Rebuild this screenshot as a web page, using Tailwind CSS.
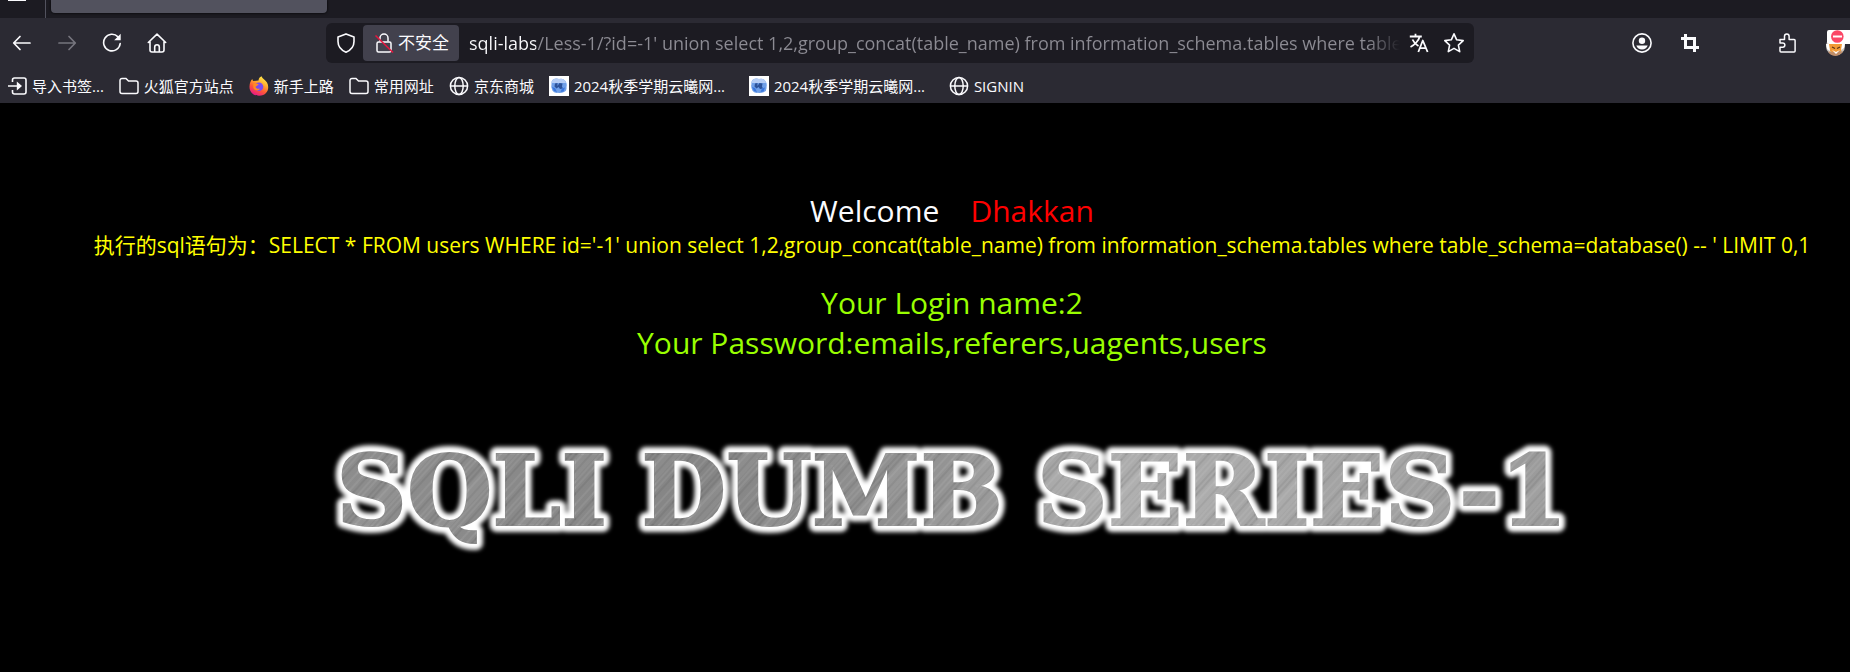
<!DOCTYPE html>
<html lang="zh-CN">
<head>
  <meta charset="UTF-8" />
  <meta name="viewport" content="width=device-width, initial-scale=1.0"/>
  <title>Less-1 **Error Based- String**</title>
  <script src="https://cdn.jsdelivr.net/npm/@tailwindcss/browser@4"></script>
</head>
<body class="bg-black min-h-screen overflow-x-hidden text-[#fbfbfe] font-['Open_Sans','Noto_Sans_CJK_SC',sans-serif]">

  <!-- shared icons -->
  <svg class="hidden">
    <symbol id="folder" viewBox="0 0 20 20">
      <path d="M1 4.500a2 2 0 0 1 2-2h4l2.500 2.500h7.500a2 2 0 0 1 2 2v8.500a2 2 0 0 1-2 2H3a2 2 0 0 1-2-2z" fill="none" stroke="currentColor" stroke-width="1.500"/>
    </symbol>
    <symbol id="globe" viewBox="0 0 20 20">
      <g fill="none" stroke="currentColor" stroke-width="1.500"><circle cx="10" cy="10" r="8.600"/><ellipse cx="10" cy="10" rx="4.200" ry="8.600"/><path d="M1.400 10h17.200"/></g>
    </symbol>
    <symbol id="cloud" viewBox="0 0 20 20">
      <rect width="20" height="20" fill="#fff"/>
      <path d="M4 3.500q3-1.500 6-.5 4-1 6 1.500 2.500 3 1.500 6.500.5 4-2.500 5-3 1.500-6 .8-4 .7-5.500-2Q1.500 11 2.500 8 2 5 4 3.500z" fill="#6f9fe8"/>
      <path d="M4 3.500q3-1.500 6-.5 4-1 6 1.500l1 2.500H2.600q0-2 1.400-3.500z" fill="#b5cdf5"/>
      <path d="M6 7.500l2.500-.5v3l2-3 3 .5-.5 3 1 2-3 .5-1.500-2-2 1.500-2-2z" fill="#2c529a"/>
      <path d="M3 11l3 1 2 4-3-1zM13 12.500l3-1-1.500 4-3 .5z" fill="#3a77dd"/>
    </symbol>
  </svg>

  <header class="bg-[#2b2a33]">
    <!-- tab strip -->
    <div class="flex h-[18px] bg-[#1c1b22]">
      <div class="ml-2 h-px w-[18px] bg-[#fbfbfe]"></div>
      <div class="ml-[19px] w-px bg-[#52525e]"></div>
      <div class="ml-[5px] h-[13px] w-[276px] rounded-b bg-[#52525e] shadow-[0_0_3px_#000]"></div>
    </div>

    <!-- navigation bar -->
    <nav class="flex h-[51px] items-center pl-3 pb-px">
      <div class="flex gap-[25px]">
        <button aria-label="Back"><svg class="size-5" viewBox="0 0 20 20" fill="none" stroke="currentColor" stroke-width="1.700" stroke-linecap="round" stroke-linejoin="round"><path d="M18 10H2M8 3.500L1.700 10 8 16.500"/></svg></button>
        <button aria-label="Forward" class="text-[#76757e]" disabled><svg class="size-5" viewBox="0 0 20 20" fill="none" stroke="currentColor" stroke-width="1.700" stroke-linecap="round" stroke-linejoin="round"><path d="M2 10h16M12 3.500l6.300 6.500-6.300 6.500"/></svg></button>
        <button aria-label="Reload"><svg class="size-5" viewBox="0 0 20 20" fill="none" stroke="currentColor" stroke-width="1.600" stroke-linecap="round"><path d="M16 3.900A8.300 8.300 0 1 0 18.200 10.500"/><path d="M18.700.8v6.500h-6.500z" fill="currentColor" stroke="none"/></svg></button>
        <button aria-label="Home"><svg class="size-5" viewBox="0 0 20 20" fill="none" stroke="currentColor" stroke-width="1.600" stroke-linecap="round" stroke-linejoin="round"><path d="M1.300 9.500L10 1.200l8.700 8.300M3 8.500v8.500a2 2 0 0 0 2 2h10a2 2 0 0 0 2-2V8.500M7.700 19v-5a2.300 2.300 0 0 1 4.600 0v5"/></svg></button>
      </div>

      <div class="ml-[159px] flex h-10 min-w-0 flex-1 items-center rounded-md bg-[#1c1b22] pl-[10px] pr-[9px]">
        <svg class="size-5 shrink-0" viewBox="0 0 20 20" fill="none" stroke="currentColor" stroke-width="1.600" stroke-linejoin="round"><path d="M10 .9l8 3.200v4.400c0 4.800-3 8.600-8 10.700-5-2.100-8-5.900-8-10.700V4.100z"/></svg>
        <button class="ml-[7px] flex h-9 shrink-0 items-center gap-[3px] rounded bg-[#42414d] px-[10px] text-[17px] whitespace-nowrap">
          <svg class="size-[22px]" viewBox="0 0 22 22" fill="none"><path d="M7 9.500V6a4 4 0 0 1 8 0v3.500" stroke="currentColor" stroke-width="1.500"/><rect x="4" y="10" width="14" height="10" rx="1.500" stroke="currentColor" stroke-width="1.500"/><path d="M2.500 3.500L20 20.500" stroke="#e5173f" stroke-width="1.600"/></svg>
          不安全
        </button>
        <!-- host part is white, the rest of the address grey and faded at the end -->
        <input type="text" aria-label="Address" value="sqli-labs/Less-1/?id=-1' union select 1,2,group_concat(table_name) from information_schema.tables where table_schema=database() --+" class="ml-[10px] h-8 min-w-0 flex-1 bg-[linear-gradient(to_right,#fbfbfe_67px,#8c8b93_67px,#8c8b93_calc(100%-41px),transparent_calc(100%-9px))] bg-clip-text text-[18px] text-transparent outline-none" />
        <button aria-label="Translate"><svg class="size-5" viewBox="0 0 20 20" fill="none" stroke="currentColor" stroke-width="1.800" stroke-linejoin="round"><path d="M.8 3.500h12M6.500.8v2.500M10.700 3.500C9.800 7.500 5.500 12 1.500 14M3.500 6.500c1 2.500 3.500 5 6 6.500"/><path d="M9.300 19l4.500-11.500L18.600 19M10.900 15.200h6"/></svg></button>
        <button aria-label="Bookmark this page" class="ml-[14px]"><svg class="size-[22px]" viewBox="0 0 22 22" fill="none" stroke="currentColor" stroke-width="1.600" stroke-linejoin="round"><path d="M11 1.800l2.700 6 6.500.8-4.800 4.500 1.300 6.500-5.700-3.200-5.700 3.200 1.300-6.500L1.800 8.600l6.500-.8z"/></svg></button>
      </div>

      <button aria-label="Account" class="ml-[158px]"><svg class="size-5" viewBox="0 0 20 20"><circle cx="10" cy="10" r="9.100" fill="none" stroke="currentColor" stroke-width="1.600"/><circle cx="10" cy="7.800" r="3.200" fill="currentColor"/><path d="M4.300 12.500h11.400q-1.500 4-5.700 4t-5.700-4z" fill="currentColor"/></svg></button>
      <button aria-label="Screenshot" class="ml-7"><svg class="size-5" viewBox="0 0 20 20" fill="none" stroke="currentColor" stroke-width="3"><path d="M5.500 1v13.500H19M1 5.500h13.500V19"/></svg></button>
      <button aria-label="Extensions" class="ml-[77px]"><svg class="size-5" viewBox="0 0 20 20" fill="none" stroke="currentColor" stroke-width="1.500" stroke-linejoin="round"><path d="M3 6.500h4.500V3.300a2.300 2.300 0 0 1 4.600 0v3.200h5a1 1 0 0 1 1 1V18a1 1 0 0 1-1 1H4a1 1 0 0 1-1-1v-3.800h2.700a2 2 0 0 0 0-4.300H3z"/></svg></button>
      <button aria-label="Proxy" class="ml-7"><svg class="h-[27px] w-[25px]" viewBox="0 0 25 27">
        <circle cx="10.500" cy="16" r="9.500" fill="#c9c5c1"/>
        <path d="M3 13h15l-2 8-6 3-5-3z" fill="#f39a35"/><path d="M3 21.500l6 .5 2 1 3-2 4 .5q-3 4-7.500 4.500Q5 25.500 3 21.500z" fill="#c08d68"/>
        <path d="M1 14l3 0 1 7-3-2zM20 14l-3 0-1 6 3-2zM7 20l4 2 4-2-4 4z" fill="#fff"/>
        <path d="M7 17l3 1.500M15 17l-3 1.500" stroke="#5c3317" stroke-width="1.200"/>
        <rect x="2" y="0" width="26" height="14" rx="2" fill="#fff"/><circle cx="12.300" cy="6.500" r="6.300" fill="#fb4766"/><path d="M8 6.500h9" stroke="#fff" stroke-width="2"/>
      </svg></button>
    </nav>

    <!-- bookmarks -->
    <div class="flex h-[34px] items-center gap-[15px] pl-2 pb-px text-[15px] leading-5 whitespace-nowrap">
      <a href="#" class="flex items-center gap-1"><svg class="size-5" viewBox="0 0 20 20" fill="none" stroke="currentColor" stroke-width="1.600"><path d="M4.500 6V4a2 2 0 0 1 2-2H16a2 2 0 0 1 2 2v12a2 2 0 0 1-2 2H6.500a2 2 0 0 1-2-2v-2M0 10h9"/><path d="M8.800 5.500L14 10l-5.200 4.500z" fill="currentColor" stroke="none"/></svg>导入书签...</a>
      <a href="#" class="flex items-center gap-[5px]"><svg class="size-5"><use href="#folder"/></svg>火狐官方站点</a>
      <a href="#" class="flex items-center gap-[5px]"><svg class="size-5" viewBox="0 0 20 20">
        <defs><linearGradient id="fox" x1=".8" y1="0" x2=".3" y2="1"><stop offset="0" stop-color="#fff44f"/><stop offset=".35" stop-color="#ffb02e"/><stop offset=".65" stop-color="#ff5a36"/><stop offset="1" stop-color="#e6148c"/></linearGradient></defs>
        <path d="M12.500.3c1 2.700 3.700 3.500 5.500 6.200 3 5.500.5 13-7.800 13.300C4 19.900.3 15.500.5 10.500.6 7 1.800 4.500 3.300 3c.2 1 .5 1.600 1 2.100L9.500 4.500c.2-2 1.300-3.500 3-4.200z" fill="url(#fox)"/>
        <circle cx="10" cy="10.800" r="4.300" fill="#7a4bf0"/><path d="M4.300 8c2-.8 4-.5 5.700.6-2 .6-2 2-3.500 2.200.5 2 2.800 2.400 4.500 1.700-1 3-6 2.500-6.700-1z" fill="#ff8a26"/>
      </svg>新手上路</a>
      <a href="#" class="flex items-center gap-[5px]"><svg class="size-5"><use href="#folder"/></svg>常用网址</a>
      <a href="#" class="flex items-center gap-[5px]"><svg class="size-5"><use href="#globe"/></svg>京东商城</a>
      <a href="#" class="flex w-[185px] items-center gap-[5px]"><svg class="size-5"><use href="#cloud"/></svg>2024秋季学期云曦网...</a>
      <a href="#" class="flex w-[185px] items-center gap-[5px]"><svg class="size-5"><use href="#cloud"/></svg>2024秋季学期云曦网...</a>
      <a href="#" class="flex items-center gap-[5px]"><svg class="size-5"><use href="#globe"/></svg>SIGNIN</a>
    </div>
  </header>

  <main class="pt-[88px] pl-[54px] text-center">
    <h1 class="text-[30px] leading-10 whitespace-pre">Welcome    <span class="text-[#ff0000]">Dhakkan</span></h1>
    <p class="text-[21px] leading-7 whitespace-nowrap text-[#ffff00]">执行的sql语句为：SELECT * FROM users WHERE id='-1' union select 1,2,group_concat(table_name) from information_schema.tables where table_schema=database() -- ' LIMIT 0,1</p>
    <p class="mt-6 text-[30px] leading-10 text-[#99ff00]">Your Login name:2<br>Your Password:emails,referers,uagents,users</p>

    <!-- brushed metal title -->
    <svg class="mx-auto mt-16 h-[130px] w-[1260px]" viewBox="0 0 1260 130" role="img" aria-label="SQLI DUMB SERIES-1">
      <defs>
        <linearGradient id="metal" x1="0" y1="0" x2="1" y2="0">
          <stop offset="0" stop-color="#8d8d8d"/><stop offset=".3" stop-color="#858585"/><stop offset=".5" stop-color="#949494"/><stop offset=".62" stop-color="#adadad"/><stop offset="1" stop-color="#9a9a9a"/>
        </linearGradient>
        <pattern id="brush" width="61" height="200" patternUnits="userSpaceOnUse" patternTransform="rotate(42)">
          <path d="M2 0v200M11 0v200M15 0v200M29 0v200M42 0v200M46 0v200M57 0v200" stroke="#fff" stroke-opacity=".14"/>
          <path d="M6 0v200M20 0v200M24 0v200M35 0v200M50 0v200" stroke="#000" stroke-opacity=".12"/>
          <path d="M33 0v200" stroke="#fff" stroke-opacity=".05" stroke-width="14"/>
        </pattern>
        <filter id="glow" x="-5%" y="-20%" width="110%" height="140%"><feGaussianBlur stdDeviation="2"/></filter>
      </defs>
      <g class="font-['DejaVu_Serif',serif] text-[98px] font-bold" text-anchor="middle">
        <text x="630" y="98" fill="#fff" stroke="#fff" stroke-width="14" stroke-linejoin="round" filter="url(#glow)">SQLI DUMB SERIES-1</text>
        <text x="630" y="98" fill="url(#metal)" stroke="url(#metal)" stroke-width="2">SQLI DUMB SERIES-1</text>
        <text x="630" y="98" fill="url(#brush)" stroke="url(#brush)" stroke-width="2">SQLI DUMB SERIES-1</text>
      </g>
    </svg>
  </main>

</body>
</html>
